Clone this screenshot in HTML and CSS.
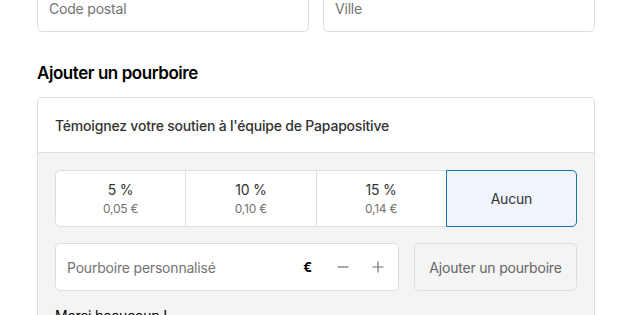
FILE: index.html
```html
<!DOCTYPE html>
<html lang="fr">
<head>
<meta charset="utf-8">
<link rel="stylesheet" href="styles.css">
</head>
<body>
<div class="page">
  <div class="field-row">
    <div class="field"><span class="ph">Code postal</span></div>
    <div class="field"><span class="ph">Ville</span></div>
  </div>
  <h2 class="heading">Ajouter un pourboire</h2>
  <section class="card">
    <div class="card-head">Témoignez votre soutien à l'équipe de Papapositive</div>
    <div class="card-body">
      <div class="tips">
        <div class="tip"><span class="pct">5 %</span><span class="amt">0,05 €</span></div>
        <div class="tip"><span class="pct">10 %</span><span class="amt">0,10 €</span></div>
        <div class="tip"><span class="pct">15 %</span><span class="amt">0,14 €</span></div>
        <div class="tip selected"><span class="pct">Aucun</span></div>
      </div>
      <div class="custom-row">
        <div class="custom">
          <span class="ph">Pourboire personnalisé</span>
          <span class="euro">€</span>
          <svg class="ctl" width="12" height="12" viewBox="0 0 12 12"><path d="M0.5 6h11" stroke="#707070" stroke-width="1.2" fill="none"/></svg>
          <svg class="ctl" width="12" height="12" viewBox="0 0 12 12"><path d="M0.5 6h11M6 0.5v11" stroke="#707070" stroke-width="1.2" fill="none"/></svg>
        </div>
        <div class="add-btn">Ajouter un pourboire</div>
      </div>
      <p class="thanks">Merci beaucoup !</p>
    </div>
  </section>
</div>
</body>
</html>
```

FILE: styles.css
```css
* { box-sizing: border-box; }
html, body { margin: 0; padding: 0; background: #fff; }
body {
  font-family: Inter, "Noto Sans", "Liberation Sans", sans-serif;
  font-size: 14px;
  letter-spacing: -0.2px;
  color: #333;
  overflow: hidden;
  height: 315px;
}
.page {
  padding: 0 25px 0 37px;
  margin-top: -15px;
}
.field-row {
  display: flex;
  gap: 14px;
}
.field {
  flex: 1;
  height: 47px;
  border: 1px solid #dedede;
  border-radius: 5px;
  display: flex;
  align-items: center;
  padding: 0 11px;
}
.ph { color: #737373; }
.heading {
  margin: 31px 0 13px;
  font-size: 17px;
  line-height: 21px;
  font-weight: 600;
  letter-spacing: -0.45px;
  color: #000;
}
.card {
  border: 1px solid #dedede;
  border-radius: 5px;
  overflow: hidden;
}
.card-head {
  height: 55px;
  display: flex;
  align-items: center;
  padding: 0 17px;
  border-bottom: 1px solid #dedede;
  font-weight: 500;
  color: #333;
  background: #fff;
}
.card-body {
  background: #f4f4f4;
  padding: 17px 17px 0;
}
.tips {
  display: flex;
  height: 57px;
  border: 1px solid #dedede;
  border-radius: 5px;
  background: #fff;
}
.tip {
  flex: 1;
  display: flex;
  flex-direction: column;
  align-items: center;
  justify-content: center;
  border-left: 1px solid #dedede;
}
.tip:first-child { border-left: 0; }
.pct { line-height: 18px; color: #333; }
.amt { font-size: 12px; line-height: 16px; color: #737373; margin-top: 2px; }
.tip.selected {
  background: #f0f5fd;
  margin: -1px -1px -1px 0;
  border: 1px solid #1773b0;
  border-radius: 0 5px 5px 0;
}
.custom-row {
  display: flex;
  gap: 15px;
  margin-top: 16px;
}
.custom {
  flex: 1;
  height: 48px;
  border: 1px solid #dedede;
  border-radius: 5px;
  background: #fff;
  display: flex;
  align-items: center;
  padding: 0 14px 0 11px;
}
.custom .ph { flex: 1; }
.euro { font-weight: 700; color: #000; font-size: 13px; margin-right: 25px; }
.ctl { margin-left: 23px; }
.ctl:first-of-type { margin-left: 0; }
.add-btn {
  width: 163px;
  height: 48px;
  border: 1px solid #dedede;
  border-radius: 5px;
  display: flex;
  align-items: center;
  justify-content: center;
  color: #666;
  background: #f4f4f4;
}
.thanks {
  margin: 16px 0 0;
  color: #000;
  line-height: 18px;
}
```
